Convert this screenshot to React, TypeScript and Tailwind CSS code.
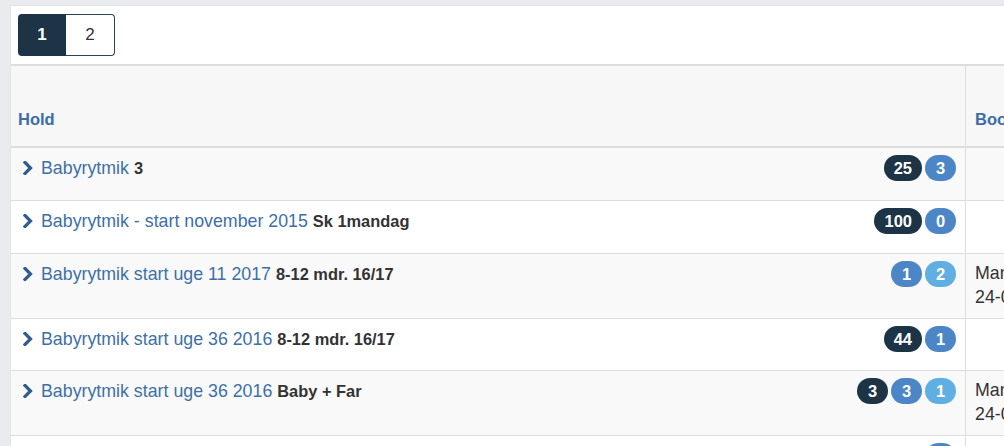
import React from "react";

type Badge = { v: string; c: "dark" | "mid" | "light" };
type Row = { link: string; bold: string; badges: Badge[]; h: string; right?: [string, string] };

const rows: Row[] = [
  { link: "Babyrytmik", bold: "3", badges: [{ v: "25", c: "dark" }, { v: "3", c: "mid" }], h: "h-[52px]" },
  { link: "Babyrytmik - start november 2015", bold: "Sk 1mandag", badges: [{ v: "100", c: "dark" }, { v: "0", c: "mid" }], h: "h-[53px]" },
  { link: "Babyrytmik start uge 11 2017", bold: "8-12 mdr. 16/17", badges: [{ v: "1", c: "mid" }, { v: "2", c: "light" }], h: "h-[65px]", right: ["Mandag", "24-04-2017"] },
  { link: "Babyrytmik start uge 36 2016", bold: "8-12 mdr. 16/17", badges: [{ v: "44", c: "dark" }, { v: "1", c: "mid" }], h: "h-[52px]" },
  { link: "Babyrytmik start uge 36 2016", bold: "Baby + Far", badges: [{ v: "3", c: "dark" }, { v: "3", c: "mid" }, { v: "1", c: "light" }], h: "h-[65px]", right: ["Mandag", "24-04-2017"] },
  { link: "Babyrytmik start uge 36 2016", bold: "Baby + Mor", badges: [{ v: "1", c: "mid" }], h: "h-[52px]" },
];

function BadgePill({ b }: { b: Badge }) {
  const cls =
    b.c === "dark"
      ? "bg-[#1c3446]"
      : b.c === "mid"
      ? "bg-[#4c86c6]"
      : "bg-[#5fafe3]";
  return (
    <span
      className={`${cls} inline-flex h-[26px] min-w-[31px] items-center justify-center rounded-full px-[10px] text-[16.5px] font-bold leading-none text-white`}
    >
      {b.v}
    </span>
  );
}

function Chevron() {
  return (
    <svg width="10" height="14" viewBox="0 0 10 14" className="mr-[8px] shrink-0">
      <path d="M2 1.5 L7.5 7 L2 12.5" fill="none" stroke="#2f5d8c" strokeWidth="3.2" strokeLinecap="square" strokeLinejoin="miter" />
    </svg>
  );
}

export default function App() {
  return (
    <div
      className="h-[446px] w-[1004px] overflow-hidden bg-[#e9ebee] pl-[10px] pt-[5px]"
      style={{ fontFamily: '"Liberation Sans", Arial, Helvetica, sans-serif' }}
    >
      <div className="w-[1200px] border border-[#e2e4e7] bg-white">
        <div className="pl-[7px] pt-[8px] pb-[8px]">
          <div className="flex h-[42px]">
            <div className="flex w-[48px] items-center justify-center rounded-l-[4px] bg-[#1c3446] text-[17px] font-bold text-white">
              1
            </div>
            <div className="flex w-[49px] items-center justify-center rounded-r-[4px] border border-l-0 border-[#2c4458] text-[17px] text-[#333]">
              2
            </div>
          </div>
        </div>
        <div className="border-t-2 border-[#dddddd]">
          <div className="flex h-[82px] border-b-2 border-[#dddddd] bg-[#f7f7f7] text-[16.5px] font-bold text-[#3a6ea5]">
            <div className="flex w-[955px] items-end border-r border-[#dddddd] pb-[15px] pl-[7px]">
              <span className="leading-[24px]">Hold</span>
            </div>
            <div className="flex flex-1 items-end pb-[15px] pl-[9px]">
              <span className="leading-[24px]">Booking</span>
            </div>
          </div>
          {rows.map((r, i) => (
            <div
              key={i}
              className={`flex ${r.h} ${i > 0 ? "border-t border-[#dddddd]" : ""} ${i % 2 === 0 ? "bg-[#f9f9f9]" : "bg-white"}`}
            >
              <div className="flex w-[955px] items-start justify-between border-r border-[#dddddd] pl-[12px] pr-[9px] pt-[8px]">
                <div className="flex h-[24px] items-center whitespace-nowrap">
                  <Chevron />
                  <span className="text-[17.8px] leading-[24px] text-[#3d70a6]">{r.link}</span>
                  <span className="ml-[5px] text-[16.4px] font-bold leading-[24px] text-[#333]">{r.bold}</span>
                </div>
                <div className="flex h-[24px] items-center gap-[3px]">
                  {r.badges.map((b, j) => (
                    <BadgePill key={j} b={b} />
                  ))}
                </div>
              </div>
              <div className="flex-1 pl-[9px] pt-[7px] text-[17.8px] leading-[24px] text-[#333]">
                {r.right && (
                  <>
                    <div>{r.right[0]}</div>
                    <div>{r.right[1]}</div>
                  </>
                )}
              </div>
            </div>
          ))}
        </div>
      </div>
    </div>
  );
}
